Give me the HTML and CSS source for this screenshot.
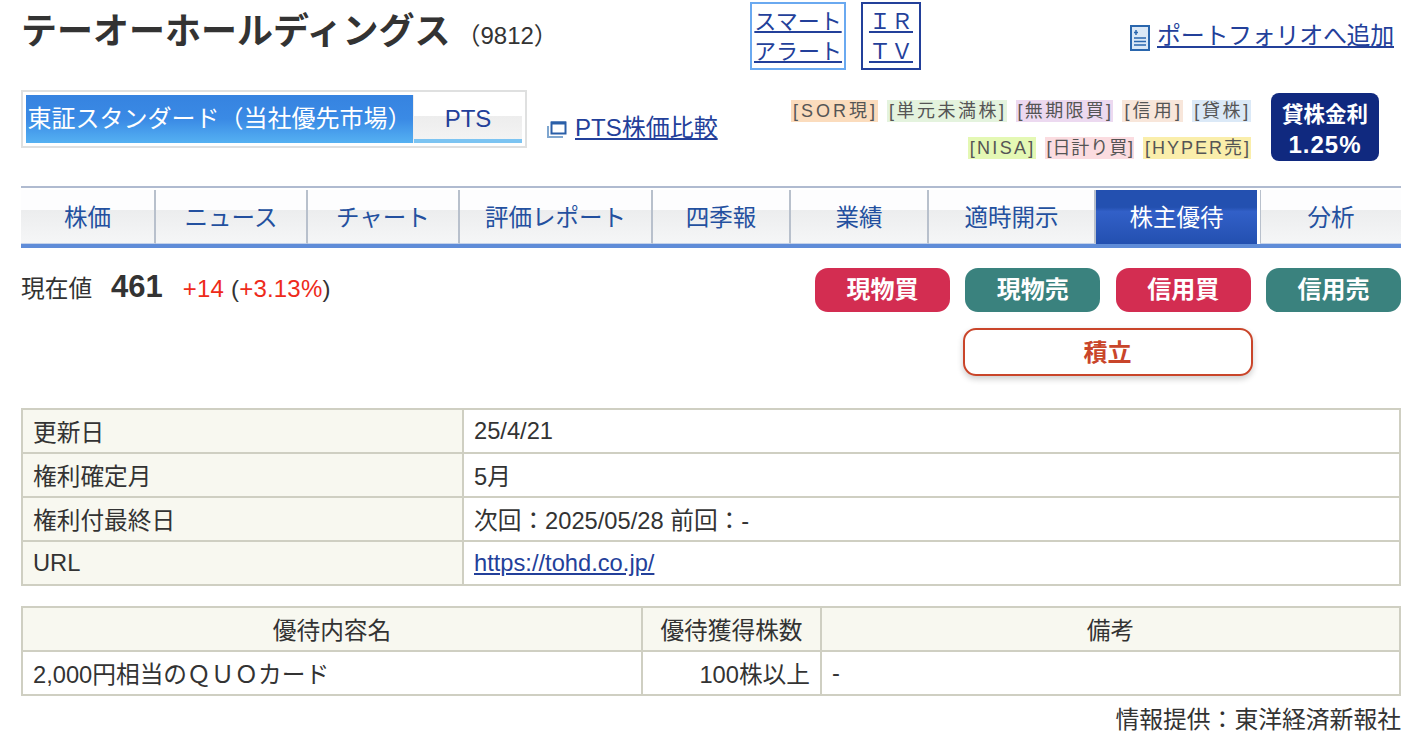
FILE: index.html
```html
<!DOCTYPE html>
<html lang="ja">
<head>
  <meta charset="UTF-8" />
  <title>テーオーホールディングス 株主優待</title>
  <link rel="stylesheet" href="styles.css">
</head>
<body>
  <div class="container">
    <div class="head-row">
      <div class="stock-name">
        <h1>テーオーホールディングス</h1>
        <span class="code">（9812）</span>
      </div>
      <a class="box-link box-smart"><span>スマート</span><span>アラート</span></a>
      <a class="box-link box-ir"><span>ＩＲ</span><span>ＴＶ</span></a>
      <div class="portfolio">
        <svg class="portfolio-icon" width="20" height="26" viewBox="0 0 20 26">
          <rect x="1" y="1" width="18" height="24" fill="#dbe8f6" stroke="#2a66ad" stroke-width="2"/>
          <path d="M6 5v5M4 7.500h4" stroke="#2a66ad" stroke-width="1.500"/>
          <path d="M4 13h12M4 16.500h12M4 20h12" stroke="#2a66ad" stroke-width="1.500"/>
        </svg>
        <a class="link">ポートフォリオへ追加</a>
      </div>
    </div>

    <div class="market-row">
      <div class="market-tabs">
        <div class="market-tab market-on">東証スタンダード（当社優先市場）</div>
        <div class="market-tab market-off">PTS</div>
      </div>
      <div class="pts-link">
        <svg width="20" height="18" viewBox="0 0 20 18">
          <path d="M1 6v11h15" fill="none" stroke="#7fa6cf" stroke-width="2"/>
          <rect x="4.500" y="2.500" width="14" height="11" fill="#fff" stroke="#2a5fa8" stroke-width="2"/>
          <path d="M4 3h15" stroke="#2a5fa8" stroke-width="3"/>
        </svg>
        <a class="link">PTS株価比較</a>
      </div>
      <div class="tags">
        <div class="tag-line">
          <span class="tag t-sor">[SOR現]</span>
          <span class="tag t-tan">[単元未満株]</span>
          <span class="tag t-mu">[無期限買]</span>
          <span class="tag t-shin">[信用]</span>
          <span class="tag t-kashi">[貸株]</span>
        </div>
        <div class="tag-line">
          <span class="tag t-nisa">[NISA]</span>
          <span class="tag t-hi">[日計り買]</span>
          <span class="tag t-hyper">[HYPER売]</span>
        </div>
      </div>
      <div class="rate-badge">貸株金利<b>1.25%</b></div>
    </div>

    <ul class="nav">
      <li style="width:135px">株価</li>
      <li style="width:152px">ニュース</li>
      <li style="width:152px">チャート</li>
      <li style="width:193px">評価レポート</li>
      <li style="width:138px">四季報</li>
      <li style="width:138px">業績</li>
      <li style="width:167px">適時開示</li>
      <li class="active" style="width:161px">株主優待</li>
      <li class="last">分析</li>
    </ul>

    <div class="price-row">
      <div class="price">
        <span class="price-label">現在値</span>
        <span class="price-num">461</span>
        <span class="price-diff"><em>+14</em> (<em>+3.13%</em>)</span>
      </div>
      <div class="orders">
        <div class="order-line">
          <a class="btn buy">現物買</a>
          <a class="btn sell">現物売</a>
          <a class="btn buy">信用買</a>
          <a class="btn sell">信用売</a>
        </div>
        <a class="btn-tsumi">積立</a>
      </div>
    </div>

    <table class="info">
      <tr><th>更新日</th><td>25/4/21</td></tr>
      <tr><th>権利確定月</th><td>5月</td></tr>
      <tr><th>権利付最終日</th><td>次回：2025/05/28 前回：-</td></tr>
      <tr><th>URL</th><td><a class="link">https://tohd.co.jp/</a></td></tr>
    </table>

    <table class="benefit">
      <tr><th class="c1">優待内容名</th><th class="c2">優待獲得株数</th><th>備考</th></tr>
      <tr><td>2,000円相当のＱＵＯカード</td><td class="num">100株以上</td><td>-</td></tr>
    </table>

    <div class="source">情報提供：東洋経済新報社</div>
  </div>
</body>
</html>
```

FILE: styles.css
```css
* {
  box-sizing: border-box;
}
html, body {
  overflow: hidden;
}
body {
  margin: 0;
  background: #fff;
  color: #333;
  font-family: "Liberation Sans", "Noto Sans CJK JP", sans-serif;
  font-size: 23.7px;
}
.container {
  width: 1380px;
  margin-left: 21px;
}
.link {
  color: #23409a;
  text-decoration: underline;
}

/* header */
.head-row {
  display: flex;
  height: 90px;
  padding-top: 2px;
}
.stock-name {
  display: flex;
  align-items: baseline;
  width: 729px;
  padding-top: 4px;
}
h1 {
  margin: 0;
  font-size: 36px;
  line-height: 52px;
  font-weight: 700;
  color: #333;
}
.code {
  margin-left: 6px;
  font-size: 24px;
}
.box-link {
  display: flex;
  flex-direction: column;
  align-items: center;
  height: 68px;
  padding-top: 3px;
  border: 2px solid #6aa9f0;
  color: #23409a;
  font-size: 22px;
  line-height: 30px;
}
.box-link span {
  text-decoration: underline;
}
.box-smart {
  width: 96px;
  margin-right: 15px;
}
.box-ir {
  width: 60px;
  border-color: #23409a;
}
.portfolio {
  display: flex;
  align-items: center;
  gap: 7px;
  height: 62px;
  margin-left: auto;
  margin-right: 7px;
  font-size: 24px;
  letter-spacing: -0.3px;
}
.portfolio-icon {
  margin-top: 10px;
}

/* market */
.market-row {
  display: flex;
  height: 96px;
}
.market-tabs {
  display: flex;
  width: 506px;
  height: 58px;
  padding: 3px;
  border: 2px solid #dfe0e0;
}
.market-tab {
  text-align: center;
  line-height: 48px;
}
.market-on {
  width: 388px;
  border-right: 1px solid #eee;
  background: linear-gradient(#3683e0, #3a8ae5 50%, #55b1f2);
  color: #fff;
  font-size: 24px;
  white-space: nowrap;
}
.market-off {
  flex: 1;
  border-bottom: 4px solid #7cc4f2;
  background: linear-gradient(#fff 48%, #ededed 48%, #f3f3f3);
  color: #23409a;
  font-size: 24px;
}
.pts-link {
  display: flex;
  align-items: center;
  gap: 8px;
  height: 70px;
  margin-left: 20px;
  font-size: 24px;
  white-space: nowrap;
}
.pts-link svg {
  margin-top: 8px;
}
.tags {
  flex: 1;
  display: flex;
  flex-direction: column;
  gap: 15px;
  padding-top: 10px;
  margin-right: 20px;
}
.tag-line {
  display: flex;
  justify-content: flex-end;
  gap: 9px;
}
.tag {
  height: 22px;
  padding-left: 2px;
  color: #555;
  font-size: 18px;
  line-height: 22px;
  letter-spacing: 2.7px;
  white-space: nowrap;
}
.t-sor { background: #fbdcbd; letter-spacing: 3px; }
.t-tan { background: #e4f3de; letter-spacing: 2.5px; }
.t-mu { background: #ecd9f0; letter-spacing: 2.3px; }
.t-shin { background: #f8e6da; letter-spacing: 3.2px; }
.t-kashi { background: #dbe9f7; }
.t-nisa { background: #e4f8b4; letter-spacing: 2.3px; }
.t-hi { background: #fbdce0; letter-spacing: 0.9px; }
.t-hyper { background: #faeeab; letter-spacing: 2px; }
.rate-badge {
  width: 108px;
  height: 68px;
  margin-top: 3px;
  margin-right: 22px;
  padding-top: 8px;
  border-radius: 8px;
  background: #10297f;
  color: #fff;
  font-size: 21.5px;
  font-weight: 700;
  line-height: 28px;
  text-align: center;
}
.rate-badge b {
  display: block;
  margin-top: 2px;
  font-size: 24px;
  letter-spacing: 1px;
}

/* nav */
.nav {
  display: flex;
  height: 62px;
  margin: 0;
  padding: 2px 0 0;
  list-style: none;
  border-top: 2px solid #b0bbd0;
  border-bottom: 4px solid #5f8cd8;
}
.nav li {
  height: 54px;
  border-right: 2px solid #b8c0cc;
  border-bottom: 1px solid #c4d2ea;
  background: linear-gradient(#fdfdfe 38%, #ecedee 38%, #f5f6f7);
  color: #23509f;
  font-size: 23.5px;
  line-height: 56px;
  text-align: center;
}
.nav li.active {
  margin-right: 3px;
  border-right: 0;
  border-bottom: 0;
  background: linear-gradient(#2350b0, #2350b0 32%, #3260c8 40%, #2350b0 100%);
  color: #fff;
}
.nav li.last {
  flex: 1;
  border-right: 0;
  border-left: 1px solid #b8c0cc;
}

/* price and order buttons */
.price-row {
  display: flex;
  justify-content: space-between;
  height: 160px;
  padding-top: 20px;
}
.price {
  display: flex;
  align-items: baseline;
  height: 40px;
  margin-top: 1px;
}
.price-num {
  margin-left: 19px;
  font-size: 31px;
  font-weight: 700;
}
.price-diff {
  margin-left: 20px;
  font-size: 24px;
  letter-spacing: 0.2px;
}
.price-diff em {
  color: #ee2a1a;
  font-style: normal;
}
.orders {
  display: flex;
  flex-direction: column;
  align-items: center;
  width: 586px;
}
.order-line {
  display: flex;
  justify-content: space-between;
  width: 100%;
}
.btn {
  width: 135px;
  height: 44px;
  border-radius: 13px;
  color: #fff;
  font-size: 24px;
  font-weight: 700;
  line-height: 44px;
  text-align: center;
}
.buy {
  background: #d32d51;
}
.sell {
  background: #3a827e;
}
.btn-tsumi {
  width: 290px;
  height: 48px;
  margin-top: 16px;
  margin-right: 1px;
  border: 2px solid #c9452a;
  border-radius: 13px;
  box-shadow: 0 3px 6px rgba(0, 0, 0, 0.2);
  color: #c9452a;
  font-size: 24px;
  font-weight: 700;
  line-height: 46px;
  text-align: center;
}

/* tables */
table {
  width: 100%;
  border-collapse: collapse;
  table-layout: fixed;
}
th, td {
  height: 44px;
  padding: 0 10px;
  border: 2px solid #cfcfc2;
  font-size: 23.7px;
  font-weight: 400;
  text-align: left;
  white-space: nowrap;
}
th {
  background: #f8f8f0;
}
.info th {
  width: 441px;
}
.benefit {
  margin-top: 20px;
}
.benefit th {
  text-align: center;
}
.benefit .c1 {
  width: 620px;
}
.benefit .c2 {
  width: 179px;
}
.benefit .num {
  text-align: right;
}
.source {
  margin-top: 4px;
  font-size: 23.8px;
  text-align: right;
}
```
